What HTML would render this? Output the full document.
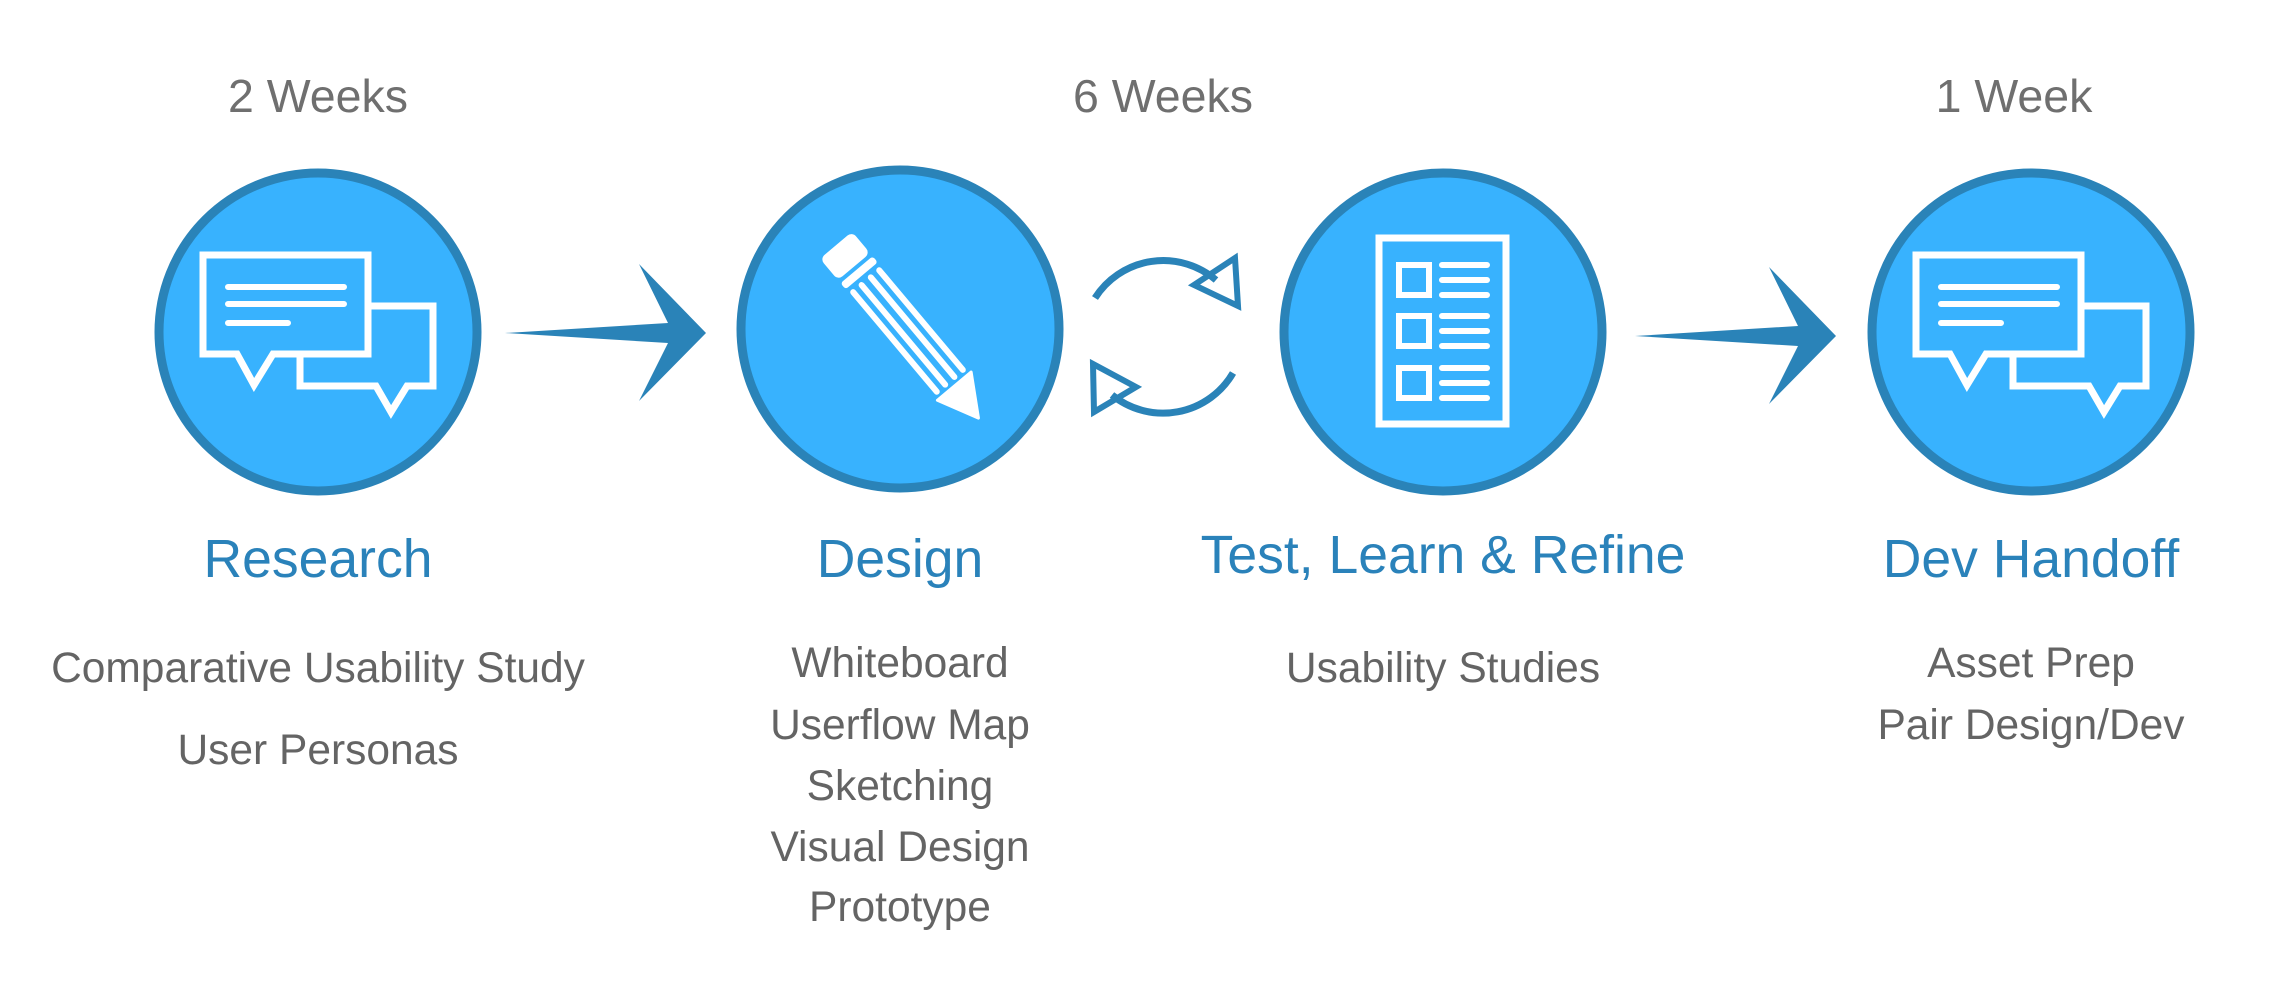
<!DOCTYPE html>
<html><head><meta charset="utf-8"><style>
html,body{margin:0;padding:0;background:#fff;width:2286px;height:996px;overflow:hidden}
svg{display:block}
.w{font-family:"Liberation Sans",sans-serif;font-size:46.5px;fill:#6f6f6f;text-anchor:middle}
.t{font-family:"Liberation Sans",sans-serif;font-size:53.5px;fill:#2a82ba;text-anchor:middle}
.i{font-family:"Liberation Sans",sans-serif;font-size:42.5px;fill:#646464;text-anchor:middle}
</style></head><body>
<svg width="2286" height="996" viewBox="0 0 2286 996" xmlns="http://www.w3.org/2000/svg">
<defs>
<g id="chat" fill="none" stroke="#fff" stroke-width="7">
  <path d="M-18 22 V54 H58 L73 80 L89 54 H115 V-26 H50"/>
  <path d="M-115 -77 H50 V22 H-45 L-64 53 L-81 22 H-115 Z" fill="#38b2fe"/>
  <path d="M-90 -45 H26 M-90 -28 H26 M-90 -9 H-30" stroke-width="6" stroke-linecap="round"/>
</g>
</defs>
<text class="w" x="318" y="112">2 Weeks</text>
<text class="w" x="1163" y="112">6 Weeks</text>
<text class="w" x="2014" y="112">1 Week</text>

<g fill="#38b2fe" stroke="#2a83b8" stroke-width="9">
<circle cx="318" cy="332" r="159"/>
<circle cx="900" cy="329" r="159"/>
<circle cx="1443" cy="332" r="159"/>
<circle cx="2031" cy="332" r="159"/>
</g>

<use href="#chat" x="318" y="332"/>
<use href="#chat" x="2031" y="332"/>

<!-- pencil -->
<g transform="translate(908,331) rotate(50)" fill="#fff">
  <rect x="-112" y="-21" width="28" height="42" rx="6"/>
  <rect x="-80" y="-21" width="8" height="42" rx="3"/>
  <rect x="-68" y="-20" width="136" height="6" rx="3"/>
  <rect x="-68" y="-9" width="136" height="6" rx="3"/>
  <rect x="-68" y="3" width="136" height="6" rx="3"/>
  <rect x="-68" y="14" width="136" height="6" rx="3"/>
  <path d="M72 -22 L72 22 L112 2 Z" stroke="#fff" stroke-width="3" stroke-linejoin="round"/>
</g>

<!-- refresh -->
<g fill="none" stroke="#2a83b8" stroke-width="7">
  <path d="M1095 298 A81 81 0 0 1 1216 280"/>
  <path d="M1233 373 A81 81 0 0 1 1112 395"/>
  <path d="M1235 258 L1238 306 L1194 285 Z" stroke-width="6"/>
  <path d="M1093 364 L1094 412 L1136 387 Z" stroke-width="6"/>
</g>

<!-- checklist -->
<g fill="none" stroke="#fff">
  <rect x="1379" y="238" width="127" height="186" stroke-width="7"/>
  <rect x="1399" y="265" width="30" height="30" stroke-width="6"/>
  <rect x="1399" y="316" width="30" height="30" stroke-width="6"/>
  <rect x="1399" y="368" width="30" height="30" stroke-width="6"/>
  <g stroke-width="6" stroke-linecap="round">
    <path d="M1442 265 H1487 M1442 280 H1487 M1442 295 H1487"/>
    <path d="M1442 316 H1487 M1442 331 H1487 M1442 346 H1487"/>
    <path d="M1442 368 H1487 M1442 383 H1487 M1442 398 H1487"/>
  </g>
</g>

<!-- arrows -->
<polygon fill="#2a83b8" points="505,333 668,323 639,264 706,333 639,401 668,343"/>
<polygon fill="#2a83b8" points="1635,336 1798,326 1769,267 1836,336 1769,404 1798,346"/>

<text class="t" x="318" y="577">Research</text>
<text class="t" x="900" y="577">Design</text>
<text class="t" x="1443" y="573">Test, Learn &amp; Refine</text>
<text class="t" x="2031" y="577">Dev Handoff</text>

<text class="i" x="318" y="682">Comparative Usability Study</text>
<text class="i" x="318" y="764">User Personas</text>

<text class="i" x="900" y="677">Whiteboard</text>
<text class="i" x="900" y="739">Userflow Map</text>
<text class="i" x="900" y="800">Sketching</text>
<text class="i" x="900" y="861">Visual Design</text>
<text class="i" x="900" y="921">Prototype</text>

<text class="i" x="1443" y="682">Usability Studies</text>

<text class="i" x="2031" y="677">Asset Prep</text>
<text class="i" x="2031" y="739">Pair Design/Dev</text>
</svg>
</body></html>
